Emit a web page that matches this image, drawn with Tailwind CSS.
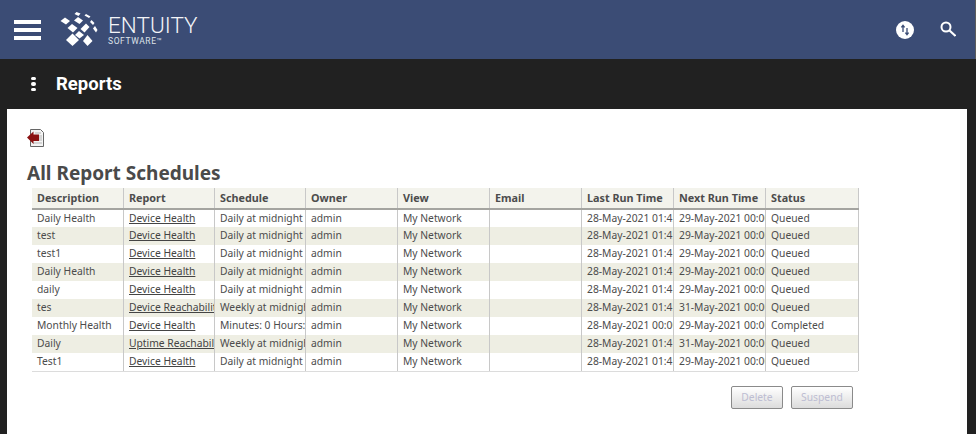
<!DOCTYPE html>
<html lang="en">
<head>
    <meta charset="UTF-8">
    <title>Reports</title>
    <script src="https://cdn.jsdelivr.net/npm/@tailwindcss/browser@4"></script>
</head>
<body class="w-[976px] h-[434px] overflow-hidden bg-[#212121] font-['DejaVu_Sans',sans-serif]">
    <!-- Top bar -->
    <header class="h-[59px] bg-[#3b4c75] flex items-center text-white border-r border-[#5c5c5c]">
        <div class="ml-[14px] w-[27px] flex flex-col gap-[4px]">
            <span class="h-[4px] bg-white"></span>
            <span class="h-[4px] bg-white"></span>
            <span class="h-[4px] bg-white"></span>
        </div>
        <svg class="ml-[19px] -mt-[1px]" width="40" height="36" viewBox="60 11 40 36" fill="#fff">
            <path d="M72.500 33.500l6.500 6.500-6.500 6-6.500-6z"/>
            <path d="M87.500 35l5 6-5 5-4.500-5z"/>
            <path d="M65 17.500l5 3.500-4 3.500-5.500-3.500z"/>
            <path d="M72 24l5.500 4-4.500 4.500-5.500-4.500z"/>
            <path d="M78 17l5 3.500-3.500 3.500-5.500-3.500z"/>
            <path d="M86 23.500l3.500 3.500-5 5.500-4-3.500z"/>
            <path d="M79 31l5 4-4.500 3.500-4.500-3.500z"/>
            <path d="M76.500 12l4 1.500-2 2.500-4-2z"/>
            <path d="M86 14l4.500 2.500-1.500 1.500-4.500-2.500z"/>
            <path d="M91.500 20l3 3-1.500 2-3-3z"/>
            <path d="M95 26l2.500 4-1.500 2.500-3-4z"/>
        </svg>
        <div class="ml-[8px] flex flex-col font-['Roboto',sans-serif]">
            <span class="text-[22.500px] leading-[22px] font-light text-[#f4f5f8]">ENTUITY</span>
            <span class="mt-[1px] text-[8.500px] leading-[9px] tracking-[0.6px] text-[#dfe3ea]">SOFTWARE™</span>
        </div>
        <div class="ml-auto mr-[19px] flex items-center gap-[26px]">
            <span class="w-[18px] h-[18px] rounded-full bg-white flex items-center justify-center">
                <svg width="12" height="12" viewBox="0 0 12 12" fill="none" stroke="#3b4c75" stroke-width="1.300">
                    <path d="M4 8V1.500M2.400 3.300L4 1.200l1.600 2.100M8 4V10.500M6.400 8.700L8 10.800l1.600-2.100"/>
                </svg>
            </span>
            <svg class="-mt-[2px]" width="16" height="16" viewBox="0 0 16 16" fill="none" stroke="#fff" stroke-width="2">
                <circle cx="6" cy="6" r="4.500"/>
                <path d="M9.500 9.500L15.500 15" stroke-width="2.200"/>
            </svg>
        </div>
    </header>

    <!-- Page title bar -->
    <div class="h-[50px] flex items-center text-white">
        <div class="ml-[31px] w-[5px] flex flex-col gap-[2px]">
            <span class="h-[3.500px] rounded-full bg-white"></span>
            <span class="h-[3.500px] rounded-full bg-white"></span>
            <span class="h-[3.500px] rounded-full bg-white"></span>
        </div>
        <h1 class="ml-[20px] mt-[2px] text-[18.500px] font-bold font-['Roboto',sans-serif]">Reports</h1>
    </div>

    <!-- Content -->
    <main class="ml-[7px] w-[960px] h-[325px] bg-white pt-[20px] pl-[20px]">
        <svg width="18" height="18" viewBox="0 0 18 18">
            <path d="M3.500 .500h10l3 3v14h-13z" fill="#f4f4f4" stroke="#666" stroke-width="1"/>
            <path d="M8 4h6M12 7h3M12 9h3M12 11h3M6 14h9" stroke="#b5b5b5" stroke-width="1"/>
            <path d="M0 8.500L6.500 2.500V5.500h5.500v6.500H6.500v3z" fill="#8a1212"/>
        </svg>
        <h2 class="mt-[15px] text-[19px] leading-[22px] font-bold text-[#4a4a4a] font-['Noto_Sans',sans-serif]">All Report Schedules</h2>

        <div class="ml-[5px] mt-[4px] w-[826px] border-b border-[#dcdcdc] text-[10.300px] font-['Noto_Sans',sans-serif] text-[#4c4c4c]">
            <table class="w-[826px] table-fixed border-collapse">
                <colgroup>
                    <col class="w-[91.500px]"><col class="w-[91px]"><col class="w-[91px]"><col class="w-[92px]"><col class="w-[92px]"><col class="w-[92px]"><col class="w-[92px]"><col class="w-[92px]"><col class="w-[92.500px]">
                </colgroup>
                <thead>
                    <tr class="h-[21px] bg-[#f3f3ec] border-b-2 border-[#a4a4a0] font-bold text-[10.800px]">
                        <th class="px-[5px] text-left border-r border-[#c8c8c8]">Description</th>
                        <th class="px-[5px] text-left border-r border-[#c8c8c8]">Report</th>
                        <th class="px-[5px] text-left border-r border-[#c8c8c8]">Schedule</th>
                        <th class="px-[5px] text-left border-r border-[#c8c8c8]">Owner</th>
                        <th class="px-[5px] text-left border-r border-[#c8c8c8]">View</th>
                        <th class="px-[5px] text-left border-r border-[#c8c8c8]">Email</th>
                        <th class="px-[5px] text-left border-r border-[#c8c8c8]">Last Run Time</th>
                        <th class="px-[5px] text-left border-r border-[#c8c8c8]">Next Run Time</th>
                        <th class="px-[5px] text-left border-r border-[#c8c8c8]">Status</th>
                    </tr>
                </thead>
                <tbody id="rows"></tbody>
            </table>
        </div>

        <div class="ml-[704px] mt-[14px] flex gap-[8px] text-[10.300px] font-['Noto_Sans',sans-serif] text-[#bdbdd2]">
            <button disabled class="w-[52px] h-[23px] rounded-[2px] border border-[#8a8a8a] bg-gradient-to-b from-white to-[#dcdcdc]">Delete</button>
            <button disabled class="w-[62px] h-[23px] rounded-[2px] border border-[#8a8a8a] bg-gradient-to-b from-white to-[#dcdcdc]">Suspend</button>
        </div>
    </main>

    <script>
        const schedules = [
            ['Daily Health', 'Device Health', 'Daily at midnight', '28-May-2021 01:45', '29-May-2021 00:00', 'Queued'],
            ['test', 'Device Health', 'Daily at midnight', '28-May-2021 01:45', '29-May-2021 00:00', 'Queued'],
            ['test1', 'Device Health', 'Daily at midnight', '28-May-2021 01:45', '29-May-2021 00:00', 'Queued'],
            ['Daily Health', 'Device Health', 'Daily at midnight', '28-May-2021 01:45', '29-May-2021 00:00', 'Queued'],
            ['daily', 'Device Health', 'Daily at midnight', '28-May-2021 01:45', '29-May-2021 00:00', 'Queued'],
            ['tes', 'Device Reachability', 'Weekly at midnight', '28-May-2021 01:45', '31-May-2021 00:00', 'Queued'],
            ['Monthly Health', 'Device Health', 'Minutes: 0 Hours: 0', '28-May-2021 00:00', '29-May-2021 00:00', 'Completed'],
            ['Daily', 'Uptime Reachability', 'Weekly at midnight', '28-May-2021 01:45', '31-May-2021 00:00', 'Queued'],
            ['Test1', 'Device Health', 'Daily at midnight', '28-May-2021 01:45', '29-May-2021 00:00', 'Queued']
        ];
        const td = 'pl-[5px] overflow-hidden whitespace-nowrap border-r border-[#c8c8c8]';
        const rows = schedules.map((s, i) => `
            <tr class="h-[18px] ${i % 2 ? 'bg-[#eeeee3]' : 'bg-white'}">
                <td class="${td}">${s[0]}</td>
                <td class="${td}"><a href="#" class="underline text-[#444]">${s[1]}</a></td>
                <td class="${td}">${s[2]}</td>
                <td class="${td}">admin</td>
                <td class="${td}">My Network</td>
                <td class="${td}"></td>
                <td class="${td}">${s[3]}</td>
                <td class="${td}">${s[4]}</td>
                <td class="${td}">${s[5]}</td>
            </tr>`);
        document.getElementById('rows').innerHTML = rows.join('');
    </script>
</body>
</html>
